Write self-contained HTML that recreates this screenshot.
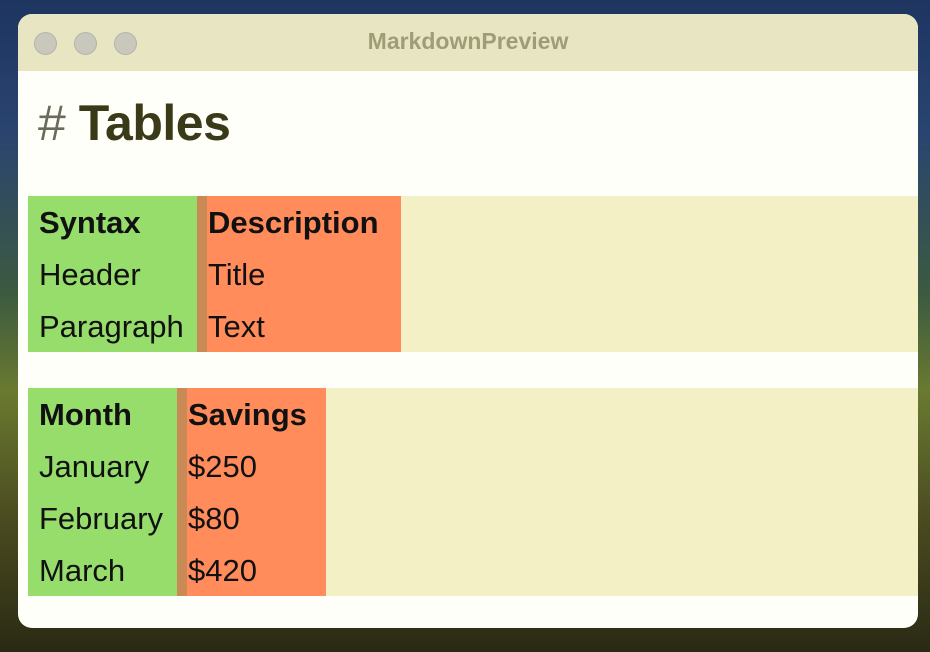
<!DOCTYPE html>
<html><head><style>
html,body{margin:0;padding:0;width:930px;height:652px;overflow:hidden}
body{background:linear-gradient(180deg,#1d3560 0%,#2a4470 20%,#3c5a40 45%,#6a7a30 60%,#4a4a20 80%,#2a2a14 100%);font-family:"Liberation Sans",sans-serif;position:relative}
.win{position:absolute;left:18px;top:14px;width:900px;height:614px;border-radius:14px;background:#fffffa;overflow:hidden}
.tb{height:57px;background:#e8e6c2;position:relative}
.dot{position:absolute;top:18px;width:23px;height:23px;border-radius:50%;background:#c8c8bc;border:1px solid #b4b4a8;box-sizing:border-box}
.title{position:absolute;left:0;right:0;top:14px;text-align:center;font-weight:bold;font-size:23px;color:#9e9d78}
h1{position:absolute;left:20px;top:80px;margin:0;font-size:50px;font-weight:bold;color:#3a3a18;letter-spacing:-0.5px}
h1 span{font-weight:normal;color:#6a6a5a}
.t{position:absolute;left:10px;width:890px;background:#f2f0c4}
.c{position:absolute;top:0;bottom:0}
.g{background:#96dd6c}
.s{background:#c98a55}
.o{background:#ff8c5a}
.r{position:absolute;font-size:31px;color:#111;white-space:nowrap}
.b{font-weight:bold}
</style></head><body>
<div class="win">
<div class="tb"><div class="dot" style="left:16px"></div><div class="dot" style="left:56px"></div><div class="dot" style="left:96px"></div><div class="title">MarkdownPreview</div></div>
<h1><span>#</span> Tables</h1>
<div class="t" style="top:182px;height:156px">
<div class="c g" style="left:0;width:169px"></div>
<div class="c s" style="left:169px;width:10px"></div>
<div class="c o" style="left:179px;width:194px"></div>
<div class="r b" style="left:11px;top:9px">Syntax</div>
<div class="r b" style="left:180px;top:9px">Description</div>
<div class="r" style="left:11px;top:61px">Header</div>
<div class="r" style="left:180px;top:61px">Title</div>
<div class="r" style="left:11px;top:113px">Paragraph</div>
<div class="r" style="left:180px;top:113px">Text</div>
</div>
<div class="t" style="top:374px;height:208px">
<div class="c g" style="left:0;width:149px"></div>
<div class="c s" style="left:149px;width:10px"></div>
<div class="c o" style="left:159px;width:139px"></div>
<div class="r b" style="left:11px;top:9px">Month</div>
<div class="r b" style="left:160px;top:9px">Savings</div>
<div class="r" style="left:11px;top:61px">January</div>
<div class="r" style="left:160px;top:61px">$250</div>
<div class="r" style="left:11px;top:113px">February</div>
<div class="r" style="left:160px;top:113px">$80</div>
<div class="r" style="left:11px;top:165px">March</div>
<div class="r" style="left:160px;top:165px">$420</div>
</div>
</div>
</body></html>
